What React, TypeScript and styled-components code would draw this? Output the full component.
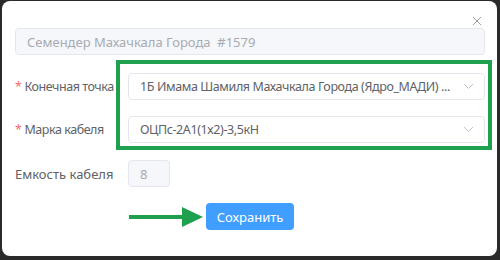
import styled, { createGlobalStyle } from 'styled-components';

const GlobalStyle = createGlobalStyle`
  html, body {
    margin: 0;
    padding: 0;
    background: #2a2a2a;
  }
  * {
    box-sizing: border-box;
  }
`;

const Backdrop = styled.div`
  width: 500px;
  height: 260px;
  padding: 1px 3px 4px 2px;
  background: #2a2a2a;
`;

const Modal = styled.div`
  position: relative;
  height: 100%;
  background: #fff;
  border-radius: 8px;
  padding: 27px 12px 0 13px;
  font-family: 'Noto Sans', 'Open Sans', sans-serif;
  font-size: 13px;
  color: #606266;
`;

const CloseButton = styled.button`
  position: absolute;
  top: 14px;
  right: 14px;
  width: 12px;
  height: 12px;
  padding: 0;
  border: 0;
  background: none;
  display: flex;
  align-items: center;
  justify-content: center;
`;

const Field = styled.div<{ $width?: number; $disabled?: boolean; $compact?: boolean }>`
  height: 27px;
  width: ${(p) => (p.$width ? `${p.$width}px` : '100%')};
  display: flex;
  align-items: center;
  gap: 8px;
  padding: 0 10px 0 11px;
  border: 1px solid #e4e7ed;
  border-radius: 4px;
  background: ${(p) => (p.$disabled ? '#f5f7fa' : '#fff')};
  color: ${(p) => (p.$disabled ? '#a8abb2' : '#606266')};
  font-size: ${(p) => (p.$compact ? '12.5px' : '13px')};
  letter-spacing: ${(p) => (p.$compact ? '-0.4px' : 'normal')};
  white-space: pre;
  overflow: hidden;
`;

const FieldText = styled.span`
  flex: 1;
  min-width: 0;
  overflow: hidden;
  text-overflow: ellipsis;
`;

const TitleField = styled(Field)`
  margin-bottom: 18px;
`;

const Highlighted = styled.div`
  position: relative;
  display: flex;
  flex-direction: column;
  gap: 16px;
  margin-bottom: 17px;
`;

const HighlightBox = styled.div`
  position: absolute;
  top: -13px;
  left: 101px;
  right: -7px;
  bottom: -7px;
  border: 4px solid #1ea04e;
  pointer-events: none;
`;

const Row = styled.div`
  display: flex;
  align-items: center;
  height: 27px;
`;

const Label = styled.label<{ $compact?: boolean }>`
  width: 113px;
  flex-shrink: 0;
  color: #606266;
  white-space: nowrap;
  font-size: ${(p) => (p.$compact ? '12.5px' : '13px')};
  letter-spacing: ${(p) => (p.$compact ? '-0.45px' : 'normal')};
`;

const Required = styled.span`
  color: #f56c6c;
  margin-right: 3px;
`;

const Control = styled.div`
  flex: 1;
  min-width: 0;
`;

const Actions = styled.div`
  display: flex;
  align-items: center;
  margin-top: 16px;
  padding-left: 114px;
  gap: 2px;
`;

const SaveButton = styled.button`
  width: 88px;
  height: 27px;
  border: 0;
  border-radius: 4px;
  background: #409eff;
  color: #fff;
  font-family: 'Noto Sans', sans-serif;
  font-size: 13px;
  padding: 0;
`;

const Chevron = () => (
  <svg width="11" height="7" viewBox="0 0 11 7" fill="none">
    <path d="M1 1l4.5 4.5L10 1" stroke="#c0c4cc" strokeWidth="1" />
  </svg>
);

const Arrow = () => (
  <svg width="75" height="22" viewBox="0 0 75 22">
    <rect x="0" y="9" width="56" height="4" fill="#1ea04e" />
    <path d="M53 1L74 11L53 21Z" fill="#1ea04e" />
  </svg>
);

const App = () => (
  <>
    <GlobalStyle />
    <Backdrop>
      <Modal>
        <CloseButton aria-label="close">
          <svg width="10" height="10" viewBox="0 0 10 10">
            <path d="M1 1l8 8M9 1l-8 8" stroke="#9a9da4" strokeWidth="1" />
          </svg>
        </CloseButton>

        <TitleField $disabled>
          <FieldText>{'Семендер Махачкала Города  #1579'}</FieldText>
        </TitleField>

        <Highlighted>
          <HighlightBox />
          <Row>
            <Label $compact>
              <Required>*</Required>Конечная точка
            </Label>
            <Control>
              <Field $compact>
                <FieldText>1Б Имама Шамиля Махачкала Города (Ядро_МАДИ) ...</FieldText>
                <Chevron />
              </Field>
            </Control>
          </Row>
          <Row>
            <Label $compact>
              <Required>*</Required>Марка кабеля
            </Label>
            <Control>
              <Field $compact>
                <FieldText>ОЦПс-2А1(1х2)-3,5кН</FieldText>
                <Chevron />
              </Field>
            </Control>
          </Row>
        </Highlighted>

        <Row>
          <Label>Емкость кабеля</Label>
          <Field $width={42} $disabled>
            8
          </Field>
        </Row>

        <Actions>
          <Arrow />
          <SaveButton>Сохранить</SaveButton>
        </Actions>
      </Modal>
    </Backdrop>
  </>
);

export default App;
